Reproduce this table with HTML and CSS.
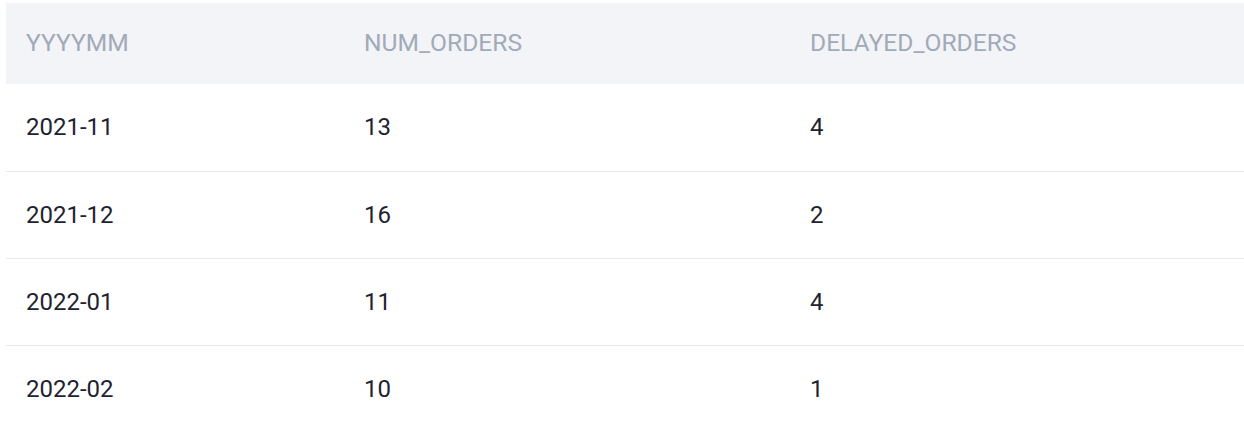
FILE: index.html
```html
<!DOCTYPE html>
<html>
<head>
<meta charset="utf-8">
<link rel="stylesheet" href="styles.css">
</head>
<body>
<table class="grid">
  <colgroup>
    <col class="c1"><col class="c2"><col class="c3">
  </colgroup>
  <thead>
    <tr><th>YYYYMM</th><th>NUM_ORDERS</th><th>DELAYED_ORDERS</th></tr>
  </thead>
  <tbody>
    <tr><td>2021-11</td><td>13</td><td>4</td></tr>
    <tr><td>2021-12</td><td>16</td><td>2</td></tr>
    <tr><td>2022-01</td><td>11</td><td>4</td></tr>
    <tr><td>2022-02</td><td>10</td><td>1</td></tr>
  </tbody>
</table>
</body>
</html>
```

FILE: styles.css
```css
html, body { margin: 0; padding: 0; background: #ffffff; }
body { padding: 3px 0 0 6px; font-family: Roboto, "Liberation Sans", sans-serif; }
.grid { border-collapse: collapse; width: 1238px; table-layout: fixed; }
.c1 { width: 338px; }
.c2 { width: 446px; }
.c3 { width: 454px; }
.grid th {
  background: #f3f4f8;
  color: #a2aab8;
  font-weight: 400;
  font-size: 24.6px;
  text-align: left;
  height: 81px;
  padding: 0 0 3px 20px;
  box-sizing: border-box;
}
.grid td {
  color: #1f2330;
  font-size: 24px;
  height: 87px;
  padding: 0 0 0 20px;
  box-sizing: border-box;
  border-top: 1px solid #e6eaf1;
}
.grid tbody tr:first-child td { border-top: none; }
.grid tbody tr:last-child td { height: 88px; }
```
